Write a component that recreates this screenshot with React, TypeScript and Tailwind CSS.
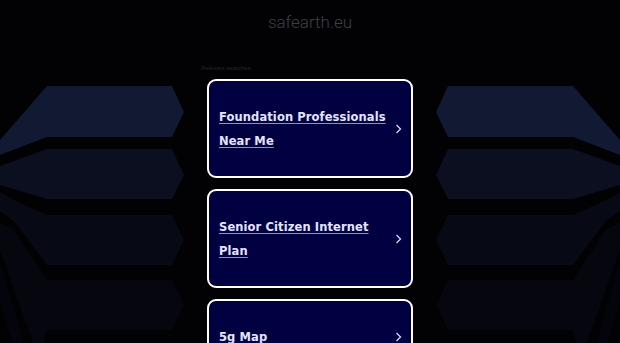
import { useState } from "react";

type Search = { label: string };

const searches: Search[] = [
  { label: "Foundation Professionals Near Me" },
  { label: "Senior Citizen Internet Plan" },
  { label: "5g Map" },
];

// backdrop panels on the left side, mirrored for the right
function SidePanels() {
  return (
    <g>
      <polygon fill="#121a33" points="0,140 47,86 172,86 184,112 172,137 47,137 0,155" />
      <polygon fill="#0b0f1f" points="0,166 47,149 172,149 184,175 172,199 47,199 0,185" />
      <polygon fill="#070914" points="0,192 14,200 47,215 172,215 184,240 172,265 47,265 14,221 0,211" />
      <polygon fill="#05060e" points="0,222 14,230 47,280 172,280 184,305 172,330 47,330 44,343 33,343 0,250" />
      <polygon fill="#04050c" points="0,262 24,343 12,343 0,300" />
    </g>
  );
}

function Backdrop() {
  return (
    <svg className="absolute left-0 top-0" width={620} height={343} viewBox="0 0 620 343">
      <SidePanels />
      <g transform="translate(620,0) scale(-1,1)">
        <SidePanels />
      </g>
    </svg>
  );
}

function Chevron() {
  return (
    <svg width={7} height={10} viewBox="0 0 7 10" className="shrink-0">
      <polyline points="1.5,1 5.5,5 1.5,9" fill="none" stroke="#d8d8f0" strokeWidth={1.3} />
    </svg>
  );
}

export default function App() {
  const [active, setActive] = useState<number | null>(null);

  return (
    <div className="relative min-h-screen overflow-hidden bg-[#020205] font-['DejaVu_Sans',sans-serif]">
      <Backdrop />
      <div className="relative flex flex-col items-center">
        <h1 className="pt-[12px] text-[17px] leading-[20px] font-light text-[#3f3f48] font-['Roboto',sans-serif]">
          safearth.eu
        </h1>
        <div className="mt-[32px] w-[218px]">
          <div className="text-[6px] leading-[8px] text-[#24242f] font-['Liberation_Sans',sans-serif]">
            Relevant searches
          </div>
          <div className="mt-[7px] flex flex-col gap-[11px] px-[6px]">
            {searches.map((s, i) => (
              <a
                key={s.label}
                href="#"
                onMouseEnter={() => setActive(i)}
                onMouseLeave={() => setActive(null)}
                className={
                  "flex items-center rounded-[9px] border-2 border-white pl-[10px] pr-[9px] pt-[24px] pb-[23px] " +
                  (active === i ? "bg-[#05055a]" : "bg-[#010142]")
                }
              >
                <span className="flex-1 pr-[4px] text-[11.5px] leading-[24px] font-bold tracking-[0.1px] text-[#e4e4ff] underline decoration-[#8c8cd8] underline-offset-[2px]">
                  {s.label}
                </span>
                <Chevron />
              </a>
            ))}
          </div>
        </div>
      </div>
    </div>
  );
}
